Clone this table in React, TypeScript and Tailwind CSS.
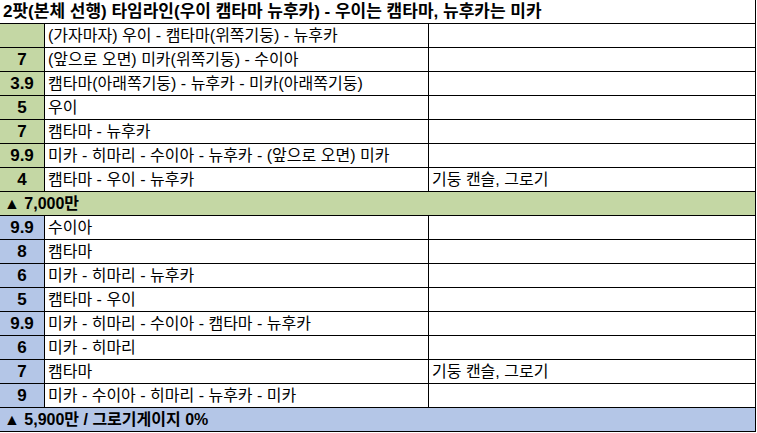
const FONT = "font-['Liberation_Sans','Noto_Sans_CJK_KR',sans-serif]"

type Row = { n: string; text: string; note?: string }

const phase1: Row[] = [
  { n: '', text: '(가자마자) 우이 - 캠타마(위쪽기둥) - 뉴후카' },
  { n: '7', text: '(앞으로 오면) 미카(위쪽기둥) - 수이아' },
  { n: '3.9', text: '캠타마(아래쪽기둥) - 뉴후카 - 미카(아래쪽기둥)' },
  { n: '5', text: '우이' },
  { n: '7', text: '캠타마 - 뉴후카' },
  { n: '9.9', text: '미카 - 히마리 - 수이아 - 뉴후카 - (앞으로 오면) 미카' },
  { n: '4', text: '캠타마 - 우이 - 뉴후카', note: '기둥 캔슬, 그로기' },
]

const phase2: Row[] = [
  { n: '9.9', text: '수이아' },
  { n: '8', text: '캠타마' },
  { n: '6', text: '미카 - 히마리 - 뉴후카' },
  { n: '5', text: '캠타마 - 우이' },
  { n: '9.9', text: '미카 - 히마리 - 수이아 - 캠타마 - 뉴후카' },
  { n: '6', text: '미카 - 히마리' },
  { n: '7', text: '캠타마', note: '기둥 캔슬, 그로기' },
  { n: '9', text: '미카 - 수이아 - 히마리 - 뉴후카 - 미카' },
]

function TimelineRow({ row, cellBg }: { row: Row; cellBg: string }) {
  return (
    <div className="flex h-[24px] border-b border-black">
      <div className={`w-[45px] shrink-0 border-r border-black ${cellBg} flex items-center justify-center font-bold text-[17px]`}>
        {row.n}
      </div>
      <div className="w-[384px] shrink-0 border-r border-black flex items-center pl-[3px] pt-px text-[16px] whitespace-nowrap">
        {row.text}
      </div>
      <div className="w-[327px] shrink-0 border-r border-black flex items-center pl-[3px] pt-px text-[16px] whitespace-nowrap">
        {row.note}
      </div>
    </div>
  )
}

function Banner({ label, bg }: { label: string; bg: string }) {
  return (
    <div className={`h-[24px] border-b border-r border-black ${bg} flex items-center pl-[4px] font-bold text-[16px] whitespace-nowrap`}>
      {label}
    </div>
  )
}

export default function App() {
  return (
    <div className={`w-[757px] h-[433px] bg-white text-black ${FONT}`}>
      <div className="w-[756px]">
        {/* Title */}
        <div className="h-[24px] border-b border-r border-black flex items-center pl-[3px] font-bold text-[17px] whitespace-nowrap">
          2팟(본체 선행) 타임라인(우이 캠타마 뉴후카) - 우이는 캠타마, 뉴후카는 미카
        </div>

        {phase1.map((r, i) => (
          <TimelineRow key={'a' + i} row={r} cellBg="bg-[#c4d7a4]" />
        ))}
        <Banner label="▲ 7,000만" bg="bg-[#c4d7a4]" />

        {phase2.map((r, i) => (
          <TimelineRow key={'b' + i} row={r} cellBg="bg-[#b4c6e7]" />
        ))}
        <Banner label="▲ 5,900만 / 그로기게이지 0%" bg="bg-[#b4c6e7]" />
      </div>
    </div>
  )
}
